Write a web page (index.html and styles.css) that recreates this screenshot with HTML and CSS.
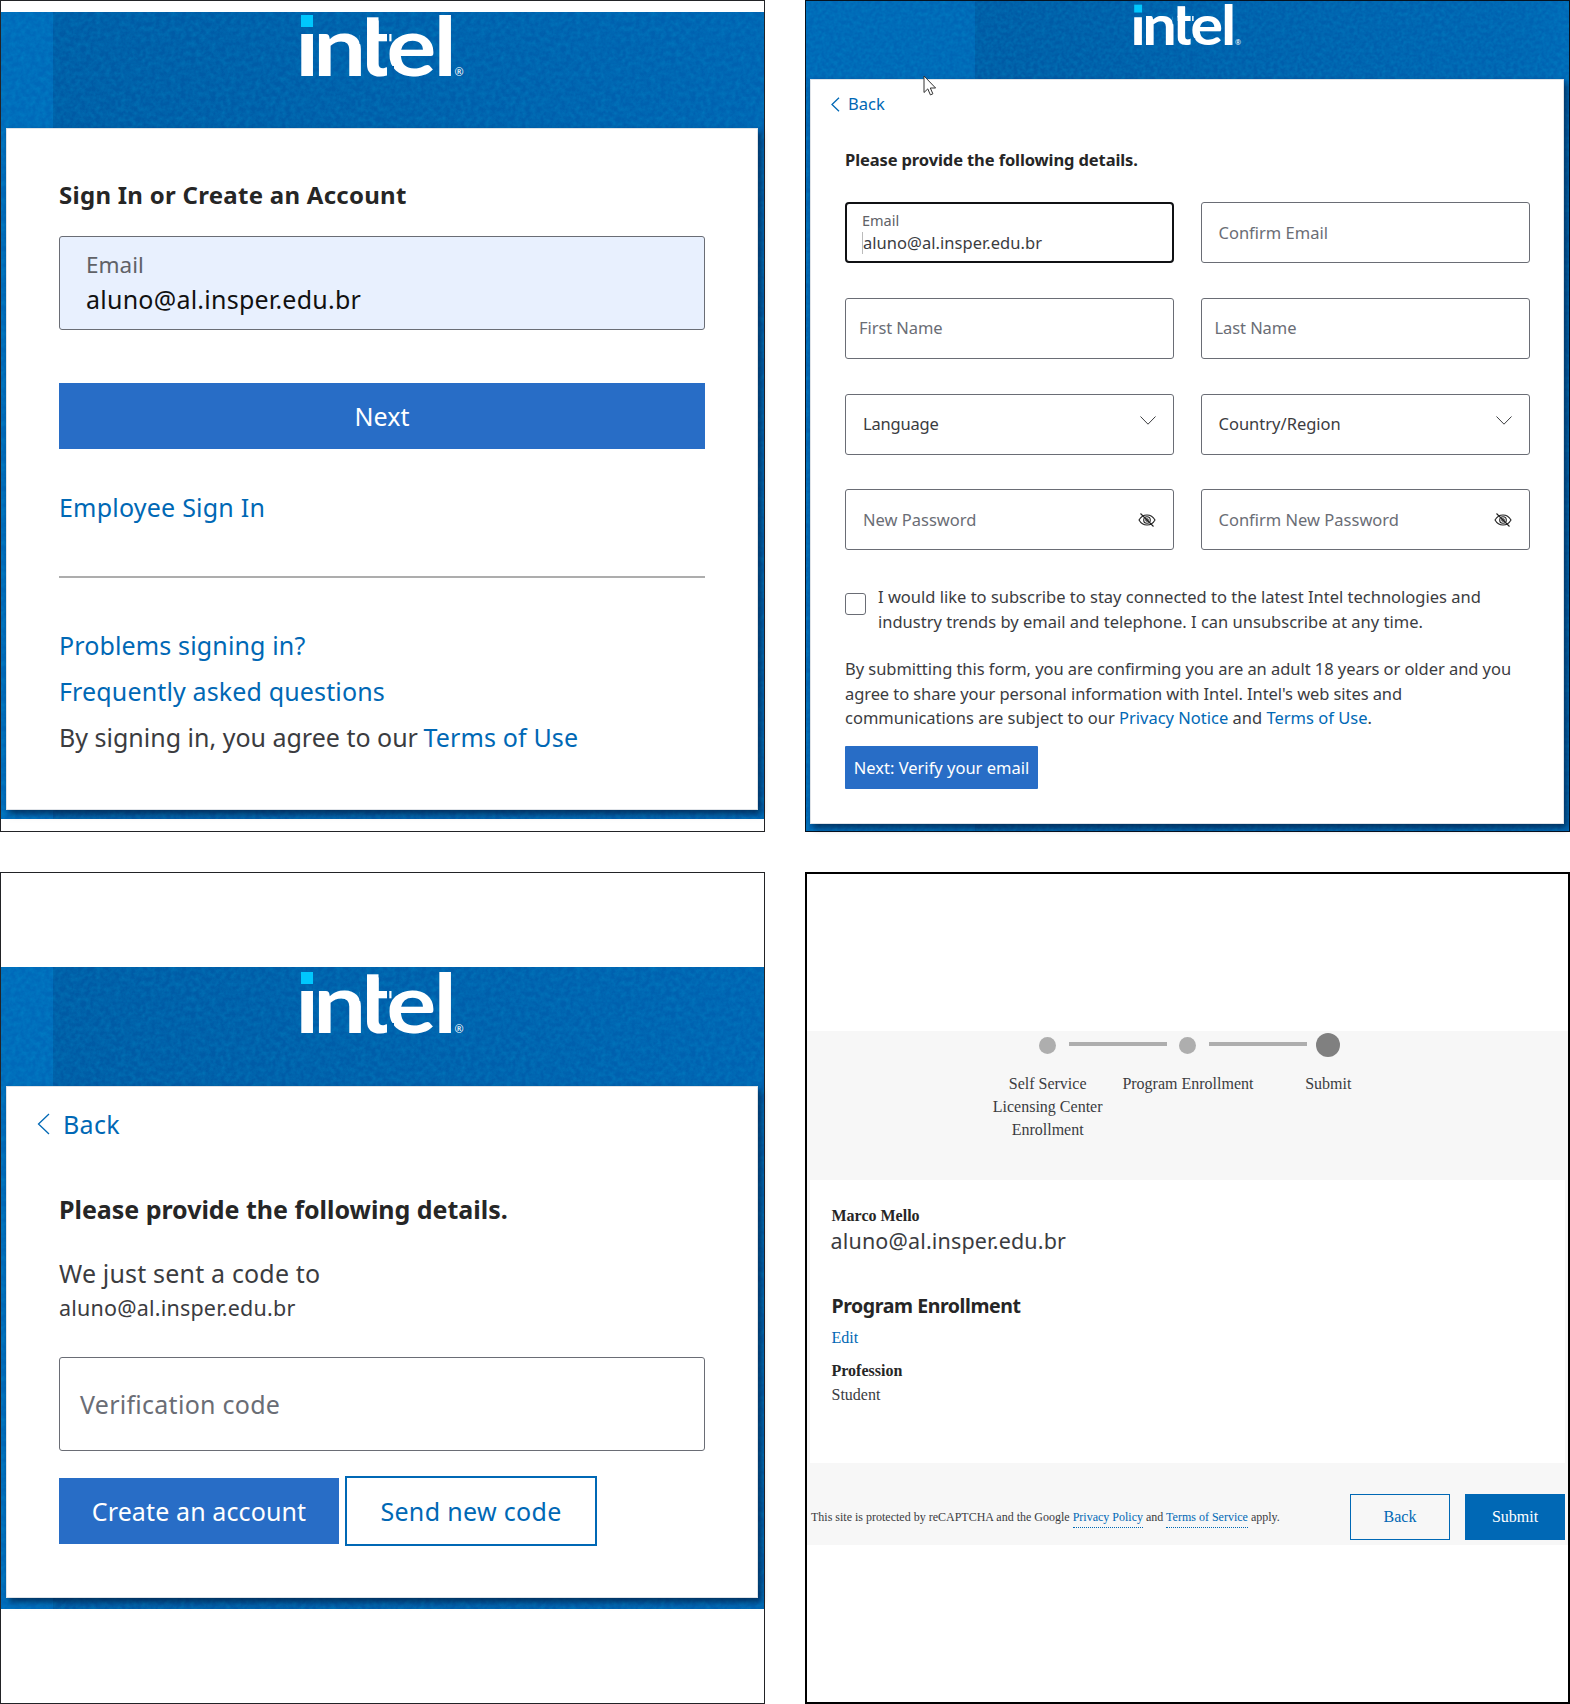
FILE: index.html
```html
<!DOCTYPE html>
<html lang="en">
<head>
<meta charset="utf-8">
<title>Intel account sign-up steps</title>
<link rel="stylesheet" href="styles.css">
</head>
<body>
<svg width="0" height="0" class="defs" aria-hidden="true">
  <defs>
    <clipPath id="logo-cut"><path d="M-1 20H16V-2H58.500V30H60.500V80H-1ZM66-2H86V80H66ZM88.300-2H180V80H93V52H88.300Z"/></clipPath>
    <symbol id="intel-logo" viewBox="0 0 164 64">
      <g clip-path="url(#logo-cut)"><text class="logo-word" transform="scale(1.13 1)" x="-5.200 10.800 50.700 75.500 117.200" y="62">intel</text></g>
      <rect class="logo-dot" x="0" y="1" width="12" height="12"/>
      <rect x="66" y="3.300" width="11.500" height="17"/>
      <text class="logo-reg" x="153.500" y="62">®</text>
    </symbol>
    <symbol id="eye-off" viewBox="0 0 18 16">
      <path d="M1 8C3 4.500 6 3 9 3s6 1.500 8 5c-2 3.500-5 5-8 5S3 11.500 1 8Z M2.500 1.500l13 13"/>
      <circle cx="9" cy="8" r="3.300"/><circle cx="9" cy="8" r="1.200"/>
    </symbol>
  </defs>
</svg>
<main class="board">
  <section class="panel signin">
    <div class="blue">
      <header class="brand"><svg class="logo" role="img" aria-label="intel"><use href="#intel-logo"/></svg></header>
      <div class="card">
        <h1 class="title">Sign In or Create an Account</h1>
        <div class="field filled"><span class="label">Email</span><span class="value">aluno@al.insper.edu.br</span></div>
        <button class="primary wide">Next</button>
        <a class="employee">Employee Sign In</a>
        <hr>
        <a class="help">Problems signing in?</a>
        <a class="help">Frequently asked questions</a>
        <p class="help terms">By signing in, you agree to our <a>Terms of Use</a></p>
      </div>
    </div>
  </section>

  <section class="panel details">
    <div class="blue">
      <header class="brand"><svg class="logo" role="img" aria-label="intel"><use href="#intel-logo"/></svg></header>
      <div class="card">
        <a class="back"><svg viewBox="0 0 9 15"><path d="M8 .700 1 7.500l7 6.800"/></svg><span>Back</span></a>
        <h1 class="title">Please provide the following details.</h1>
        <div class="form">
          <div class="field focus"><span class="label">Email</span><span class="value">aluno@al.insper.edu.br</span></div>
          <div class="field"><span>Confirm Email</span></div>
          <div class="field near"><span>First Name</span></div>
          <div class="field near"><span>Last Name</span></div>
          <div class="field select"><span class="lang">Language</span><svg class="chev" viewBox="0 0 16 9"><path d="M.500.500 8 8.200 15.500.500"/></svg></div>
          <div class="field select"><span>Country/Region</span><svg class="chev" viewBox="0 0 16 9"><path d="M.500.500 8 8.200 15.500.500"/></svg></div>
          <div class="field"><span>New Password</span><svg class="eye"><use href="#eye-off"/></svg></div>
          <div class="field"><span>Confirm New Password</span><svg class="eye"><use href="#eye-off"/></svg></div>
        </div>
        <div class="consent"><i class="box"></i><p>I would like to subscribe to stay connected to the latest Intel technologies and<br>industry trends by email and telephone. I can unsubscribe at any time.</p></div>
        <p class="legal"><span class="t1">By submitting this form, you are confirming you are an adult 18 years or older and you</span><br><span class="t2">agree to share your personal information with Intel. Intel's web sites and</span><br>communications are subject to our <a>Privacy Notice</a> and <a>Terms of Use</a>.</p>
        <button class="primary">Next: Verify your email</button>
      </div>
    </div>
    <svg class="cursor" viewBox="0 0 14 21"><path d="M1 1v16.500l3.800-3.600 2.600 6 2.500-1.100-2.600-5.800h5.300Z"/></svg>
  </section>

  <section class="panel verify">
    <div class="blue">
      <header class="brand"><svg class="logo" role="img" aria-label="intel"><use href="#intel-logo"/></svg></header>
      <div class="card">
        <a class="back"><svg viewBox="0 0 13 22"><path d="M12 1 1.500 11 12 21"/></svg><span>Back</span></a>
        <h1 class="title">Please provide the following details.</h1>
        <p class="sent">We just sent a code to</p>
        <p class="addr">aluno@al.insper.edu.br</p>
        <div class="field"><span>Verification code</span></div>
        <div class="actions"><button class="primary">Create an account</button><button class="outline">Send new code</button></div>
      </div>
    </div>
  </section>

  <section class="panel review">
    <div class="steps">
      <div class="step"><i class="dot"></i><span>Self Service<br>Licensing Center<br>Enrollment</span></div>
      <div class="step"><i class="dot"></i><span>Program Enrollment</span></div>
      <div class="step now"><i class="dot"></i><span>Submit</span></div>
    </div>
    <div class="summary">
      <b>Marco Mello</b>
      <span class="addr">aluno@al.insper.edu.br</span>
      <h2>Program Enrollment</h2>
      <a class="edit">Edit</a>
      <b>Profession</b>
      <span>Student</span>
    </div>
    <footer class="foot">
      <p>This site is protected by reCAPTCHA and the Google <a>Privacy Policy</a> and <a>Terms of Service</a> apply.</p>
      <button class="outline">Back</button><button class="solid">Submit</button>
    </footer>
  </section>
</main>
</body>
</html>
```

FILE: styles.css
```css
* { box-sizing: border-box; margin: 0; padding: 0; }
body { background: #fff; color: #3b3c3f; font-family: "Noto Sans", sans-serif; width: 1570px; }
.defs { position: absolute; }
a { color: #0068b5; }
button { font: inherit; border: 0; white-space: nowrap; }
p, h1, h2, a, span, b { white-space: nowrap; }

.board { display: grid; grid-template-columns: 765px 765px; grid-template-rows: 832px 832px; gap: 40px; }
.panel { position: relative; border: 1px solid #222326; background: #fff; }

.blue {
  display: flex; flex-direction: column;
  background:
    url("data:image/svg+xml,%3Csvg xmlns='http://www.w3.org/2000/svg' width='240' height='240'%3E%3Cfilter id='n' x='0' y='0' width='1' height='1'%3E%3CfeTurbulence type='fractalNoise' baseFrequency='.2' numOctaves='3' stitchTiles='stitch'/%3E%3CfeColorMatrix values='0 0 0 0 0 0 0 0 0 .45 0 0 0 0 .75 .4 0 0 0 -.12'/%3E%3C/filter%3E%3Crect width='240' height='240' filter='url(%23n)'/%3E%3C/svg%3E"),
    linear-gradient(90deg, #0069b9 0 52px, #005aa4 52px, #005da9 50%, #0062b1);
}
.brand { display: flex; justify-content: center; }
.logo { display: block; fill: #fff; overflow: visible; }
.logo-word { font: 700 83px Lato, sans-serif; }
.logo-dot { fill: #00c7fd; }
.logo-reg { font: 400 11px "Noto Sans", sans-serif; }

.card { background: #fff; border: 1px solid #dfe3e8; box-shadow: 3px 4px 6px rgba(0, 20, 50, .65); display: flex; flex-direction: column; align-items: flex-start; }
.title { color: #262626; font-weight: 700; }
.primary { background: #286dc6; color: #fff; }
.field { border: 1.500px solid #6a6d75; border-radius: 3px; background: #fff; color: #6a6d75; display: flex; align-items: center; }

/* sign in */
.signin { padding-top: 11px; }
.signin .blue { height: 807px; padding: 1px 5px 0; }
.signin .brand { height: 115px; }
.signin .logo, .verify .logo { width: 164px; height: 64px; margin-top: 1px; }
.signin .card { height: 682px; padding: 0 52px; width: 752px; font-size: 25px; line-height: 34px; }
.signin .title { font-size: 24px; margin-top: 49px; letter-spacing: .270px; }
.signin .field { width: 646px; height: 94px; margin-top: 24px; padding: 11px 26px; flex-direction: column; align-items: flex-start; background: #e8f0fe; }
.signin .label { font-size: 22.500px; color: #606267; line-height: 34px; }
.signin .value { font-size: 25px; color: #111; line-height: 34px; letter-spacing: .240px; }
.wide { width: 646px; height: 66px; margin-top: 53px; padding-bottom: 1px; }
.signin .employee { margin-top: 41px; letter-spacing: .220px; }
.signin hr { width: 646px; border: 0; border-top: 2px solid #adadad; margin: 52px 0 50px; }
.signin .help { height: 46px; letter-spacing: .140px; }
.signin .terms { letter-spacing: 0; }
.signin .terms a { letter-spacing: .150px; margin-left: -1px; }

/* details */
.details { border-color: #06121f; }
.details .blue {
  height: 830px; padding: 3px 4px 0;
  background-image:
    url("data:image/svg+xml,%3Csvg xmlns='http://www.w3.org/2000/svg' width='240' height='240'%3E%3Cfilter id='n' x='0' y='0' width='1' height='1'%3E%3CfeTurbulence type='fractalNoise' baseFrequency='.25' numOctaves='3' stitchTiles='stitch'/%3E%3CfeColorMatrix values='0 0 0 0 0 0 0 0 0 .45 0 0 0 0 .75 .4 0 0 0 -.12'/%3E%3C/filter%3E%3Crect width='240' height='240' filter='url(%23n)'/%3E%3C/svg%3E"),
    linear-gradient(90deg, #0066b5 0 169px, #005aa4 169px, #005da9 50%, #0062b0 94%, #0066b5);
}
.details .brand { height: 75px; }
.details .logo { width: 108px; height: 42px; }
.details .card { height: 745px; width: 754px; padding: 0 34px; font-size: 16.500px; line-height: 24px; }
.details .back { display: flex; align-items: center; margin: 12px 0 0 -14px; gap: 8px; }
.back svg { width: 9px; height: 15px; }
.back path { fill: none; stroke: #0068b5; stroke-width: 1.300; }
.details .title { font-size: 16.500px; margin-top: 32px; letter-spacing: -.110px; }
.form { display: grid; grid-template-columns: 329px 329px; grid-auto-rows: 61px; column-gap: 26.500px; row-gap: 34.800px; margin-top: 30px; }
.form .field { padding: 0 17px; border-width: 1px; }
.form .near { padding: 0 13px; letter-spacing: -.080px; }
.form .focus { border: 2px solid #101114; border-radius: 4px; flex-direction: column; align-items: flex-start; padding: 5px 15px; }
.form .label { font-size: 14.500px; line-height: 23px; color: #606267; }
.form .value { font-size: 16.500px; line-height: 22px; color: #3b3c3f; border-left: 1px solid #bbb; letter-spacing: .040px; }
.form .select { color: #3b3c3f; justify-content: space-between; }
.form .lang { letter-spacing: -.180px; }
.chev { width: 16px; height: 9px; margin-top: -7px; fill: none; stroke: #3b3c3f; }
.eye { width: 18px; height: 16px; margin-left: auto; fill: none; stroke: #222; stroke-width: 1.100; }
.consent { display: flex; margin-top: 35px; gap: 12px; line-height: 24.750px; }
.box { width: 21px; height: 22px; border: 1px solid #6a6d75; border-radius: 3px; margin-top: 8px; }
.legal { margin-top: 22px; line-height: 24.750px; }
.t1 { letter-spacing: -.050px; }
.t2 { letter-spacing: -.080px; }
.details .primary { width: 193px; height: 43px; margin-top: 15px; border-radius: 1px; }
.cursor { position: absolute; left: 117px; top: 74px; width: 14px; height: 21px; fill: #fff; stroke: #333; }

/* verify */
.verify { padding-top: 94px; }
.verify .blue { height: 642px; padding: 3px 5px 0; }
.verify .brand { height: 116px; }
.verify .card { height: 512px; width: 752px; padding: 0 52px; font-size: 25px; line-height: 34px; }
.verify .back { display: flex; align-items: center; gap: 13px; margin: 20px 0 0 -22px; letter-spacing: .300px; }
.verify .back svg { width: 13px; height: 22px; }
.verify .title { font-size: 25px; margin-top: 51px; letter-spacing: -.030px; }
.verify .sent { margin-top: 30px; letter-spacing: .170px; }
.verify .addr { font-size: 21.500px; line-height: 30px; margin-top: 3px; letter-spacing: .200px; }
.verify .field { width: 646px; height: 94px; margin-top: 34px; padding: 0 20px; letter-spacing: .270px; }
.actions { display: flex; align-items: center; gap: 6px; margin-top: 25px; }
.verify .primary { width: 280px; height: 66px; letter-spacing: .120px; padding-bottom: 1px; }
.outline { border: 2px solid #0068b5; color: #0068b5; background: transparent; }
.verify .outline { width: 252px; height: 70px; letter-spacing: .330px; padding-bottom: 1px; }

/* review */
.review { border: 2px solid #000; padding-top: 157px; font: 16px "Liberation Serif", serif; }
.steps { height: 149px; background: #f7f7f7; display: flex; padding-left: 170.500px; }
.step { width: 140.300px; display: flex; flex-direction: column; align-items: center; text-align: center; line-height: 23px; position: relative; color: #3b3c3f; }
.dot { width: 17px; height: 17px; border-radius: 50%; background: #aeaeae; margin: 6px 0 17.500px; }
.now .dot { width: 24px; height: 24px; background: #808080; margin: 2px 0 14.500px; }
.step:not(.now)::after { content: ""; position: absolute; left: 91px; top: 11px; width: 98px; height: 4px; background: #aeaeae; }
.summary { height: 283px; border: solid #f7f7f7; border-width: 0 3px; padding: 24px 21.500px 0; display: flex; flex-direction: column; align-items: flex-start; line-height: 24px; }
.summary b, h2 { color: #262626; }
.summary .addr { font: 21.500px/30px "Noto Sans", sans-serif; margin: -2px 0 0 -1px; letter-spacing: .160px; }
h2 { font: 700 19.500px/30px "Noto Sans", sans-serif; margin-top: 34.500px; letter-spacing: -.420px; }
.edit { margin: 5px 0 9px; }
.foot { height: 82px; background: #f7f7f7; padding: 26px 3px 0 4px; display: flex; align-items: center; }
.foot p { font-size: 12px; flex: 1; }
.foot p a { border-bottom: 1px dotted #0068b5; padding-bottom: 3px; }
.foot button { width: 100px; height: 46px; margin-left: 15px; }
.foot .outline { border-width: 1px; }
.solid { background: #0068b5; color: #fff; }
```
